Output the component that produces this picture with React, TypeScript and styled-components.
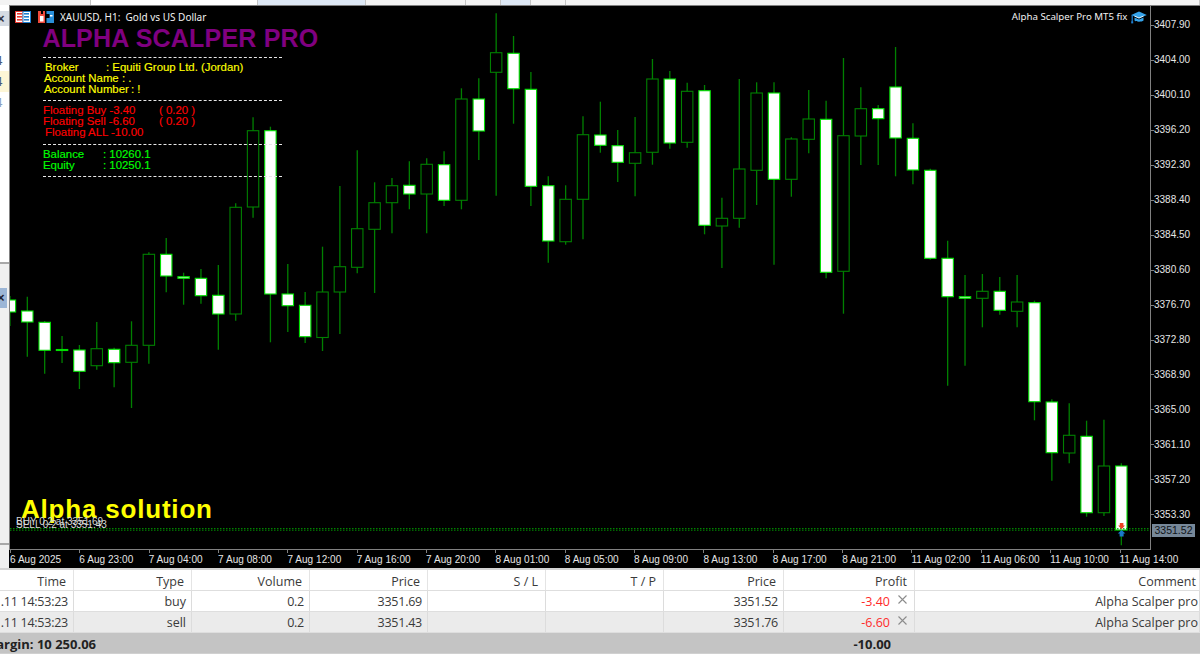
import React from "react";
import styled, { createGlobalStyle } from "styled-components";

const Global = createGlobalStyle`
  html, body { margin: 0; padding: 0; width: 1200px; height: 671px; overflow: hidden; background: #fff; }
  #root { width: 1200px; height: 671px; }
`;

const Page = styled.div`
  width: 1200px;
  height: 671px;
  display: flex;
  flex-direction: column;
  overflow: hidden;
  background: #fff;
`;

const TopStrip = styled.div`
  display: flex;
  height: 5px;
  flex: none;
`;
const TopSeg = styled.div<{ $w: number; $tone: "plain" | "white" | "blue" }>`
  width: ${(p) => p.$w}px;
  flex: none;
  border-right: 1px solid #c4c4c4;
  box-sizing: border-box;
  background: ${(p) => (p.$tone === "blue" ? "#dde8f5" : p.$tone === "white" ? "#ffffff" : "#f3f3f3")};
`;

const Middle = styled.div`
  display: flex;
  height: 563px;
  flex: none;
`;

const Side = styled.div`
  width: 9px;
  flex: none;
  display: flex;
  flex-direction: column;
  background: #fff;
  overflow: hidden;
`;
const SideClose = styled.div`
  height: 15px;
  margin-top: 6px;
  flex: none;
  background: #d5dbe3;
  color: #334;
  font: bold 13px/15px "Liberation Sans", sans-serif;
  text-indent: -3px;
`;
const SideGap = styled.div<{ $h: number }>`
  height: ${(p) => p.$h}px;
  flex: none;
`;
const SideRow = styled.div<{ $hl?: boolean; $c: string }>`
  height: 21px;
  flex: none;
  background: ${(p) => (p.$hl ? "#fdf6d6" : "transparent")};
  color: ${(p) => p.$c};
  font: 13px/21px "Noto Sans", sans-serif;
  text-indent: -5px;
`;
const SideLower = styled.div`
  flex: 1;
  background: #f0f0f0;
  display: flex;
  flex-direction: column;
`;
const SideRule = styled.div`
  height: 2px;
  flex: none;
  background: #a8a8a8;
`;
const SideButton = styled.div`
  height: 20px;
  flex: none;
  width: 7px;
  background: #9cb6d6;
  color: #223;
  font: bold 13px/20px "Liberation Sans", sans-serif;
  text-indent: -3px;
`;

const ChartWindow = styled.div`
  flex: 1;
  background: #000;
  border-top: 1px solid #808080;
  display: flex;
  flex-direction: column;
  height: 562px;
`;
const ChartRow = styled.div`
  display: flex;
  height: 544px;
  flex: none;
`;
const Plot = styled.div`
  position: relative;
  width: 1142px;
  flex: none;
  border-left: 1px solid #808080;
  border-right: 1px solid #808080;
  border-bottom: 1px solid #808080;
  box-sizing: border-box;
  overflow: visible;
`;
const PlotSvg = styled.svg`
  position: absolute;
  left: 0;
  top: 0;
  display: block;
`;

const PriceAxis = styled.div`
  flex: 1;
  padding-top: 1.8px;
  display: flex;
  flex-direction: column;
  overflow: hidden;
`;
const PriceLabel = styled.div`
  height: 34.98px;
  flex: none;
  display: flex;
  align-items: center;
  color: #e6e6e6;
  font: 10px/12px "Liberation Sans", sans-serif;
  &::before {
    content: "";
    width: 3px;
    height: 1px;
    background: #808080;
    flex: none;
  }
`;
const PriceBox = styled.div`
  position: absolute;
  left: 1142px;
  top: 518px;
  width: 43px;
  height: 13px;
  background: #778899;
  color: #101418;
  font: 10.5px/13px "Liberation Sans", sans-serif;
  text-align: center;
  z-index: 3;
`;

const TimeAxis = styled.div`
  display: flex;
  padding-left: 1px;
  flex: 1;
  overflow: hidden;
`;
const TimeLabel = styled.div`
  width: 69.35px;
  flex: none;
  display: flex;
  flex-direction: column;
  color: #e6e6e6;
  font: 10px/12px "Liberation Sans", sans-serif;
  letter-spacing: 0.05px;
  white-space: nowrap;
  &::before {
    content: "";
    width: 1px;
    height: 3px;
    background: #808080;
    flex: none;
    margin-bottom: 1px;
  }
`;

const WindowTitle = styled.div`
  position: absolute;
  left: 5px;
  top: 5px;
  display: flex;
  align-items: center;
  gap: 6.5px;
  color: #f0f0f0;
  font: 10px/12px "Noto Sans", sans-serif;
  white-space: pre;
`;
const ExpertTag = styled.div`
  position: absolute;
  right: 3px;
  top: 4px;
  display: flex;
  align-items: center;
  gap: 3.5px;
  color: #f0f0f0;
  font: 9.7px/14px "Noto Sans", sans-serif;
`;
const Title = styled.div`
  position: absolute;
  left: 32.4px;
  top: 17.5px;
  color: #800080;
  font: bold 25px/28px "Liberation Sans", sans-serif;
  letter-spacing: 0.2px;
  white-space: nowrap;
`;
const Solution = styled.div`
  position: absolute;
  left: 11px;
  top: 488.5px;
  color: #ffff00;
  font: bold 26px/28px "Liberation Sans", sans-serif;
  letter-spacing: 0.8px;
  white-space: nowrap;
  z-index: 2;
`;
const OrderTag = styled.div<{ $top: number }>`
  position: absolute;
  left: 6px;
  top: ${(p) => p.$top}px;
  color: #d8d8d8;
  font: 10px/12px "Liberation Sans", sans-serif;
  white-space: nowrap;
  z-index: 2;
`;

const Info = styled.div`
  position: absolute;
  left: 33px;
  top: 51px;
  width: 239px;
  display: flex;
  flex-direction: column;
`;
const Dash = styled.div<{ $mt: number }>`
  margin-top: ${(p) => p.$mt}px;
  height: 0;
  border-top: 1px dashed #e8e8e8;
  flex: none;
`;
const InfoRow = styled.div<{ $c: string; $indent: number; $mt?: number }>`
  display: flex;
  height: 11px;
  flex: none;
  margin-top: ${(p) => p.$mt ?? 0}px;
  padding-left: ${(p) => p.$indent}px;
  color: ${(p) => p.$c};
  font: 11.4px/11px "Liberation Sans", sans-serif;
  -webkit-text-stroke: 0.15px ${(p) => p.$c};
  white-space: nowrap;
`;
const InfoName = styled.span<{ $w: number }>`
  width: ${(p) => p.$w}px;
  flex: none;
`;

const Table = styled.div`
  border-top: 2px solid #d4d4d4;
  flex: none;
  font: 12.5px/23px "Open Sans", sans-serif;
  color: #3a3a3a;
`;
const GridRow = styled.div<{ $bg: string }>`
  display: grid;
  grid-template-columns: 74px 118px 118px 118px 118px 118px 120px 131px 285px;
  height: 21px;
  background: ${(p) => p.$bg};
  box-sizing: border-box;
  border-bottom: 1px solid #dedede;
`;
const HeadCell = styled.div<{ $pad?: number }>`
  text-align: right;
  padding-right: ${(p) => p.$pad ?? 7}px;
  border-right: 1.5px solid #e4e4e4;
  white-space: nowrap;
  overflow: hidden;
`;
const Cell = styled.div<{ $pad?: number; $tight?: boolean }>`
  display: flex;
  justify-content: flex-end;
  align-items: center;
  gap: 8px;
  padding-right: ${(p) => p.$pad ?? 5}px;
  padding-top: 2px;
  line-height: 20px;
  letter-spacing: ${(p) => (p.$tight ? "-0.25px" : "0")};
  border-right: 1.5px solid #dcdcdc;
  white-space: nowrap;
  overflow: hidden;
`;
const Loss = styled.span`
  color: #ff2a2a;
`;
const CloseIcon = styled.svg`
  width: 9px;
  height: 9px;
  flex: none;
  margin-top: -5px;
`;
const Footer = styled.div`
  height: 21px;
  display: flex;
  background: #c4c4c4;
  border-bottom: 1px solid #d0d0d0;
  box-sizing: border-box;
  font-size: 13px;
  font-weight: 700;
  color: #222;
`;
const FooterCell = styled.div<{ $w: number }>`
  width: ${(p) => p.$w}px;
  flex: none;
  display: flex;
  justify-content: flex-end;
  white-space: nowrap;
  overflow: hidden;
`;

// top, bottom of body; high, low of wick; w = white candle
type C = [number, number, number, number, 0 | 1];
const candles: C[] = [
  [300, 312, 296, 326, 1],
  [311, 322, 296.7, 356.7, 1],
  [322.3, 350.3, 321, 373.7, 1],
  [349.5, 350.5, 336, 363, 1],
  [350, 371.3, 345, 389, 1],
  [348.7, 365.7, 322, 369.7, 0],
  [349.3, 362.7, 347.7, 387.3, 1],
  [345.3, 362.3, 321.3, 408, 0],
  [254.3, 345.3, 252.3, 363.7, 0],
  [254.3, 276, 238, 292.3, 1],
  [276.7, 278.3, 272.7, 304.7, 1],
  [278.3, 295.7, 269, 303.7, 1],
  [295.3, 314, 265, 349.7, 1],
  [207.3, 314, 203.3, 320.7, 0],
  [130.7, 207, 117.3, 217.7, 0],
  [130.7, 294, 126.7, 342.3, 1],
  [294, 305.7, 264, 332, 1],
  [305.3, 336.7, 292, 343, 1],
  [292, 337.5, 246.7, 351, 0],
  [266.7, 292, 186, 334, 0],
  [228.7, 267.3, 150.3, 273.3, 0],
  [202.7, 229.3, 182.3, 293, 0],
  [185.7, 202.7, 178, 233.3, 0],
  [185.3, 194, 161.3, 209.3, 1],
  [164.3, 194, 158.3, 233.3, 0],
  [164.7, 200.3, 151.3, 206, 1],
  [99, 200.3, 88.3, 209.3, 0],
  [99, 131, 78.3, 160, 1],
  [52.7, 72.3, 13.3, 195.7, 0],
  [53.3, 88.7, 36, 123.7, 1],
  [89.3, 186.3, 72, 206, 1],
  [185.7, 241, 176.3, 262.7, 1],
  [199.3, 241.7, 185.3, 244.7, 0],
  [134.7, 199.3, 116.3, 239.3, 0],
  [135, 145.3, 101.7, 152.7, 1],
  [145.7, 162.3, 130, 182, 1],
  [152.7, 163.3, 117, 196.3, 0],
  [79, 152.3, 59, 164.7, 0],
  [79, 143, 71, 148.7, 1],
  [91.3, 142.3, 82.7, 147.7, 0],
  [90.7, 225.3, 85, 234.3, 1],
  [218.3, 226, 197.7, 268, 0],
  [169, 218.3, 79, 227.7, 0],
  [93, 170.3, 82.3, 205, 0],
  [93, 179.3, 82.3, 264.7, 1],
  [139, 179.3, 137.3, 196.7, 0],
  [119, 139.3, 90, 153.3, 0],
  [119.3, 272.3, 100.7, 278.3, 1],
  [135.7, 271.3, 58, 313.7, 0],
  [108.7, 136, 87.3, 165, 0],
  [108.7, 118.7, 105, 165, 1],
  [87, 138, 47, 176.3, 1],
  [138.3, 170, 123.3, 184.3, 1],
  [170.3, 258.3, 168.7, 259.7, 1],
  [258.3, 296.7, 240.7, 385.7, 1],
  [296.7, 298.3, 275, 365.7, 1],
  [291.3, 298.3, 274, 327.3, 0],
  [291.3, 310.3, 277, 314.7, 1],
  [302, 311.3, 275, 327.3, 0],
  [302.7, 401.7, 300.7, 420.3, 1],
  [402, 452.7, 399.3, 480.7, 1],
  [435.3, 453, 403.3, 463.3, 0],
  [436.3, 512.7, 420.7, 516.7, 1],
  [466, 512.7, 419.7, 516, 0],
  [466, 530, 463.3, 545.3, 1],
];

const prices = ["3407.90","3404.00","3400.10","3396.20","3392.30","3388.40","3384.50","3380.60","3376.70","3372.80","3368.90","3365.00","3361.10","3357.20","3353.30"];
const times = ["6 Aug 2025","6 Aug 23:00","7 Aug 04:00","7 Aug 08:00","7 Aug 12:00","7 Aug 16:00","7 Aug 20:00","8 Aug 01:00","8 Aug 05:00","8 Aug 09:00","8 Aug 13:00","8 Aug 17:00","8 Aug 21:00","11 Aug 02:00","11 Aug 06:00","11 Aug 10:00","11 Aug 14:00"];

const CandleChart = () => (
  <PlotSvg width={1140} height={543} viewBox="10 6 1140 543">
    {candles.map(([t, b, h, l, w], i) => {
      const x = 9.95 + 17.365 * i;
      return (
        <g key={i}>
          <line x1={x} x2={x} y1={h} y2={l} stroke="#008000" strokeWidth={1.3} />
          <rect
            x={x - 5.7}
            y={t}
            width={11.4}
            height={b - t}
            fill={w ? "#ffffff" : "#000000"}
            stroke={w ? "#00e000" : "#008000"}
            strokeWidth={1.1}
          />
        </g>
      );
    })}
    <line x1={10} x2={1150} y1={528.6} y2={528.6} stroke="#00a000" strokeWidth={0.9} strokeDasharray="1.5 1.5" />
    <line x1={10} x2={1150} y1={530.2} y2={530.2} stroke="#00a000" strokeWidth={0.9} strokeDasharray="1.5 1.5" />
    <polygon points="1119.8,523 1123.4,523 1123.4,525.5 1125,525.5 1121.6,529.2 1118.2,525.5 1119.8,525.5" fill="#ee4422" />
    <polygon points="1121.6,530 1125.4,533.4 1123.6,533.4 1123.6,536.6 1119.6,536.6 1119.6,533.4 1117.8,533.4" fill="#1a78c8" />
  </PlotSvg>
);

const ListIcon = () => (
  <svg width="16" height="12" viewBox="0 0 16 12">
    <rect x="0.5" y="0.5" width="7.5" height="11" fill="#fff" stroke="#e8392f" />
    <rect x="8" y="0.5" width="7.5" height="11" fill="#fff" stroke="#1f7fd0" />
    <rect x="2" y="2" width="5" height="1.6" fill="#e8392f" />
    <rect x="2" y="5" width="5" height="1.6" fill="#e8392f" />
    <rect x="2" y="8" width="5" height="1.6" fill="#e8392f" />
    <rect x="9" y="2" width="5" height="1.6" fill="#1f7fd0" />
    <rect x="9" y="5" width="5" height="1.6" fill="#1f7fd0" />
    <rect x="9" y="8" width="5" height="1.6" fill="#1f7fd0" />
  </svg>
);

const ChartIcon = () => (
  <svg width="16" height="12" viewBox="0 0 16 12">
    <path d="M0 0h3v3h2V0h2v12H0z" fill="#ef4a3c" />
    <rect x="2" y="5" width="3.5" height="5.5" fill="#fff" />
    <path d="M8.5 0H16v12H8.5V7h3V3h-3z" fill="#2a8fd8" />
    <rect x="12" y="4" width="2.5" height="1.5" fill="#fff" />
  </svg>
);

const CapIcon = () => (
  <svg width="16" height="13" viewBox="0 0 16 13">
    <polygon points="8,0.5 15.8,4 8,7.5 0.2,4" fill="#35a3ea" />
    <path d="M3.5 6.6 8 8.6 12.5 6.6V9.6C11 11.2 5 11.2 3.5 9.6z" fill="#35a3ea" />
    <path d="M3.5 5 8 7 12.5 5" fill="none" stroke="#e8f4fc" strokeWidth="1" />
    <rect x="0.6" y="4" width="1.2" height="7" fill="#1f7fd0" />
    <rect x="0.2" y="10.4" width="2" height="2" fill="#1f7fd0" />
  </svg>
);

const Close = () => (
  <CloseIcon viewBox="0 0 9 9">
    <path d="M0.5 0.5 8.5 8.5M8.5 0.5 0.5 8.5" stroke="#8c8c8c" strokeWidth="1.1" fill="none" />
  </CloseIcon>
);

const heads = ["Time", "Type", "Volume", "Price", "S / L", "T / P", "Price", "Profit", "Comment"];

const rows = [
  { bg: "#ffffff", type: "buy", open: "3351.69", cur: "3351.52", profit: "-3.40" },
  { bg: "#ebebeb", type: "sell", open: "3351.43", cur: "3351.76", profit: "-6.60" },
];

export default function App() {
  return (
    <Page>
      <Global />
      <TopStrip>
        <TopSeg $w={91} $tone="plain" />
        <TopSeg $w={167} $tone="white" />
        <TopSeg $w={108} $tone="blue" />
        <TopSeg $w={100} $tone="plain" />
        <TopSeg $w={35} $tone="plain" />
        <TopSeg $w={30} $tone="blue" />
        <TopSeg $w={35} $tone="plain" />
        <TopSeg $w={634} $tone="plain" />
      </TopStrip>
      <Middle>
        <Side>
          <SideClose>×</SideClose>
          <SideGap $h={24} />
          <SideRow $c="#4a5a78">4</SideRow>
          <SideRow $c="#4a5a78" $hl>4</SideRow>
          <SideRow $c="#8aa0c0">4</SideRow>
          <SideGap $h={149} />
          <SideRule />
          <SideLower>
            <SideGap $h={24} />
            <SideButton>×</SideButton>
            <SideGap $h={235} />
            <SideRule />
          </SideLower>
        </Side>
        <ChartWindow>
          <ChartRow>
            <Plot>
              <CandleChart />
              <WindowTitle>
                <ListIcon />
                <ChartIcon />
                {"XAUUSD, H1:  Gold vs US Dollar"}
              </WindowTitle>
              <ExpertTag>
                Alpha Scalper Pro MT5 fix
                <CapIcon />
              </ExpertTag>
              <Title>ALPHA SCALPER PRO</Title>
              <Info>
                <Dash $mt={0} />
                <InfoRow $c="#ffff00" $indent={2} $mt={4}>
                  <InfoName $w={61}>Broker</InfoName>: Equiti Group Ltd. (Jordan)
                </InfoRow>
                <InfoRow $c="#ffff00" $indent={1}>
                  <InfoName $w={78}>Account Name</InfoName>: .
                </InfoRow>
                <InfoRow $c="#ffff00" $indent={1}>
                  <InfoName $w={87}>Account Number</InfoName>: !
                </InfoRow>
                <Dash $mt={5} />
                <InfoRow $c="#ff0000" $indent={0} $mt={4}>
                  <InfoName $w={116}>Floating Buy -3.40</InfoName>( 0.20 )
                </InfoRow>
                <InfoRow $c="#ff0000" $indent={0}>
                  <InfoName $w={116}>Floating Sell -6.60</InfoName>( 0.20 )
                </InfoRow>
                <InfoRow $c="#ff0000" $indent={2}>Floating ALL -10.00</InfoRow>
                <Dash $mt={6} />
                <InfoRow $c="#00ff00" $indent={0} $mt={4}>
                  <InfoName $w={60}>Balance</InfoName>: 10260.1
                </InfoRow>
                <InfoRow $c="#00ff00" $indent={0}>
                  <InfoName $w={60}>Equity</InfoName>: 10250.1
                </InfoRow>
                <Dash $mt={5} />
              </Info>
              <Solution>Alpha solution</Solution>
              <OrderTag $top={510}>BUY 0.2 at 3351.69</OrderTag>
              <OrderTag $top={513}>SELL 0.2 at 3351.43</OrderTag>
              <PriceBox>3351.52</PriceBox>
            </Plot>
            <PriceAxis>
              {prices.map((p) => (
                <PriceLabel key={p}>{p}</PriceLabel>
              ))}
            </PriceAxis>
          </ChartRow>
          <TimeAxis>
            {times.map((t) => (
              <TimeLabel key={t}>{t}</TimeLabel>
            ))}
          </TimeAxis>
        </ChartWindow>
      </Middle>
      <Table>
        <GridRow $bg="#ffffff">
          {heads.map((h, i) => (
            <HeadCell key={i} $pad={i === 8 ? 3 : 7}>{h}</HeadCell>
          ))}
        </GridRow>
        {rows.map((r) => (
          <GridRow key={r.type} $bg={r.bg}>
            <Cell $tight>.11 14:53:23</Cell>
            <Cell>{r.type}</Cell>
            <Cell $tight>0.2</Cell>
            <Cell $tight>{r.open}</Cell>
            <Cell />
            <Cell />
            <Cell $tight>{r.cur}</Cell>
            <Cell $pad={7}>
              <Loss>{r.profit}</Loss>
              <Close />
            </Cell>
            <Cell $pad={1}>Alpha Scalper pro</Cell>
          </GridRow>
        ))}
        <Footer>
          <FooterCell $w={96}>argin: 10 250.06</FooterCell>
          <FooterCell $w={795}>-10.00</FooterCell>
        </Footer>
      </Table>
    </Page>
  );
}
